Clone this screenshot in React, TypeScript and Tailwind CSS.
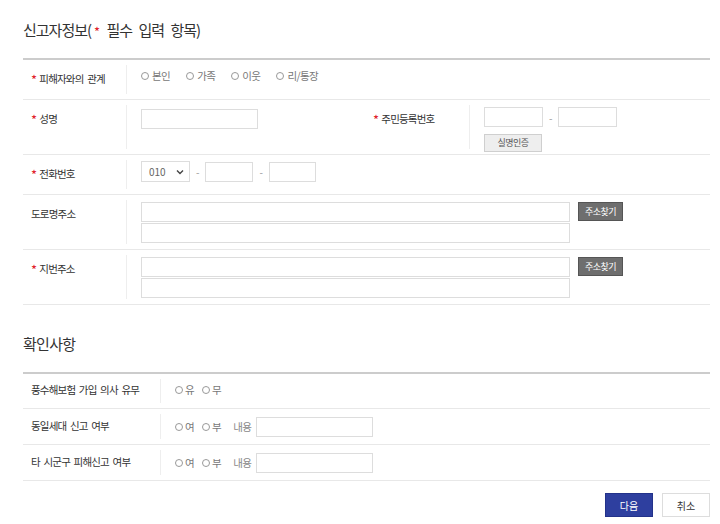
import React from "react";

const font = { fontFamily: '"Noto Sans CJK KR", "Noto Sans", sans-serif' };

function Star() {
  return <span className="text-[#e0202a] text-[13px] mr-[3px] relative top-[2px] leading-none">*</span>;
}

function Label({ text, required, width = "w-[104px]", pt = "pt-[6px]" }: { text: string; required?: boolean; width?: string; pt?: string }) {
  return (
    <div className={`${width} ${pt} shrink-0 my-[5px] border-r border-[#eeeeee] pl-[8px] text-[10.5px] tracking-[-0.8px] [word-spacing:2px] text-[#333] leading-[16px]`}>
      {required && <Star />}
      {text}
    </div>
  );
}

function Radio({ text, gap = "gap-[3px]" }: { text: string; gap?: string }) {
  return (
    <label className={`flex items-center ${gap} text-[10.5px] tracking-[-0.6px] text-[#777]`}>
      <span className="w-[8px] h-[8px] rounded-full border border-[#999] bg-white inline-block" />
      {text}
    </label>
  );
}

function Box({ w }: { w: string }) {
  return <input className={`${w} h-[20px] border border-[#dddddd] bg-white outline-none`} />;
}

function Dash() {
  return <span className="text-[#999] text-[10px] mx-[6px]">-</span>;
}

function AddressRow({ required, title }: { required?: boolean; title: string }) {
  return (
    <div className="flex h-[55px] border-b border-[#e8e8e8]">
      <Label text={title} required={required} />
      <div className="flex pl-[14px] pt-[7px] gap-[8px]">
        <div className="flex flex-col gap-[1px]">
          <Box w="w-[429px]" />
          <Box w="w-[429px]" />
        </div>
        <button className="w-[45px] h-[19px] bg-[#6e6e6e] border border-[#555] text-white text-[9px] tracking-[-0.5px] leading-none">
          주소찾기
        </button>
      </div>
    </div>
  );
}

export default function App() {
  return (
    <div style={font} className="w-[720px] h-[524px] bg-white px-[23px] pr-[10px] pt-[18px]">
      <h2 className="text-[15px] tracking-[-1px] [word-spacing:4px] text-[#333] leading-[24px] font-normal">
        신고자정보(<span className="text-[#e0202a] text-[13px] relative top-[1px] ml-[3px] mr-[1px]">*</span> 필수 입력 항목)
      </h2>

      <div className="mt-[15px] border-t-2 border-[#cccccc]">
        <div className="flex h-[40px] border-b border-[#e8e8e8]">
          <Label text="피해자와의 관계" required />
          <div className="flex items-start pl-[14px] pt-[8px] gap-[16px]">
            <Radio text="본인" />
            <Radio text="가족" />
            <Radio text="이웃" />
            <Radio text="리/통장" />
          </div>
        </div>

        <div className="flex h-[55px] border-b border-[#e8e8e8]">
          <Label text="성명" required />
          <div className="w-[238px] shrink-0 pl-[14px] pt-[7px]">
            <Box w="w-[117px]" />
          </div>
          <Label text="주민등록번호" required width="w-[105px]" />
          <div className="pl-[14px] pt-[7px]">
            <div className="flex items-center">
              <Box w="w-[59px]" />
              <Dash />
              <Box w="w-[59px]" />
            </div>
            <button className="mt-[2px] w-[58px] h-[18px] bg-[#eeeeee] border border-[#cfcfcf] text-[9px] tracking-[-0.5px] text-[#555] leading-none">
              실명인증
            </button>
          </div>
        </div>

        <div className="flex h-[40px] border-b border-[#e8e8e8]">
          <Label text="전화번호" required />
          <div className="flex items-start pl-[14px] pt-[6px]">
            <div className="w-[49px] h-[21px] border border-[#dddddd] flex items-center justify-between pl-[7px] pr-[5px] text-[10px] text-[#666]">
              010
              <svg width="8" height="6" viewBox="0 0 8 6">
                <path d="M1 1.5 L4 4.5 L7 1.5" stroke="#444" strokeWidth="1.4" fill="none" />
              </svg>
            </div>
            <div className="flex items-center h-[21px]">
              <Dash />
              <Box w="w-[48px]" />
              <Dash />
              <Box w="w-[47px]" />
            </div>
          </div>
        </div>

        <AddressRow title="도로명주소" />
        <AddressRow title="지번주소" required />
      </div>

      <h2 className="mt-[27px] text-[15px] tracking-[-0.7px] text-[#333] leading-[24px] font-normal">확인사항</h2>

      <div className="mt-[16px] border-t-2 border-[#cccccc]">
        <div className="flex h-[35px] border-b border-[#e8e8e8]">
          <Label text="풍수해보험 가입 의사 유무" width="w-[138px]" pt="pt-[3px]" />
          <div className="flex items-start pl-[14px] pt-[8px] gap-[8px]">
            <Radio text="유" gap="gap-[2px]" />
            <Radio text="무" gap="gap-[2px]" />
          </div>
        </div>
        {["동일세대 신고 여부", "타 시군구 피해신고 여부"].map((t) => (
          <div key={t} className="flex h-[36px] border-b border-[#e8e8e8]">
            <Label text={t} width="w-[138px]" pt="pt-[4px]" />
            <div className="flex items-center pl-[14px] gap-[8px]">
              <Radio text="여" gap="gap-[2px]" />
              <Radio text="부" gap="gap-[2px]" />
              <span className="ml-[4px] text-[10.5px] tracking-[-0.6px] text-[#888]">내용</span>
              <Box w="w-[117px] -ml-[3px]" />
            </div>
          </div>
        ))}
      </div>

      <div className="flex justify-end gap-[9px] mt-[12px]">
        <button className="w-[48px] h-[24px] bg-[#2e3f9f] border border-[#23328a] text-white text-[10px]">다음</button>
        <button className="w-[48px] h-[24px] bg-white border border-[#dddddd] text-[#333] text-[10px]">취소</button>
      </div>
    </div>
  );
}
